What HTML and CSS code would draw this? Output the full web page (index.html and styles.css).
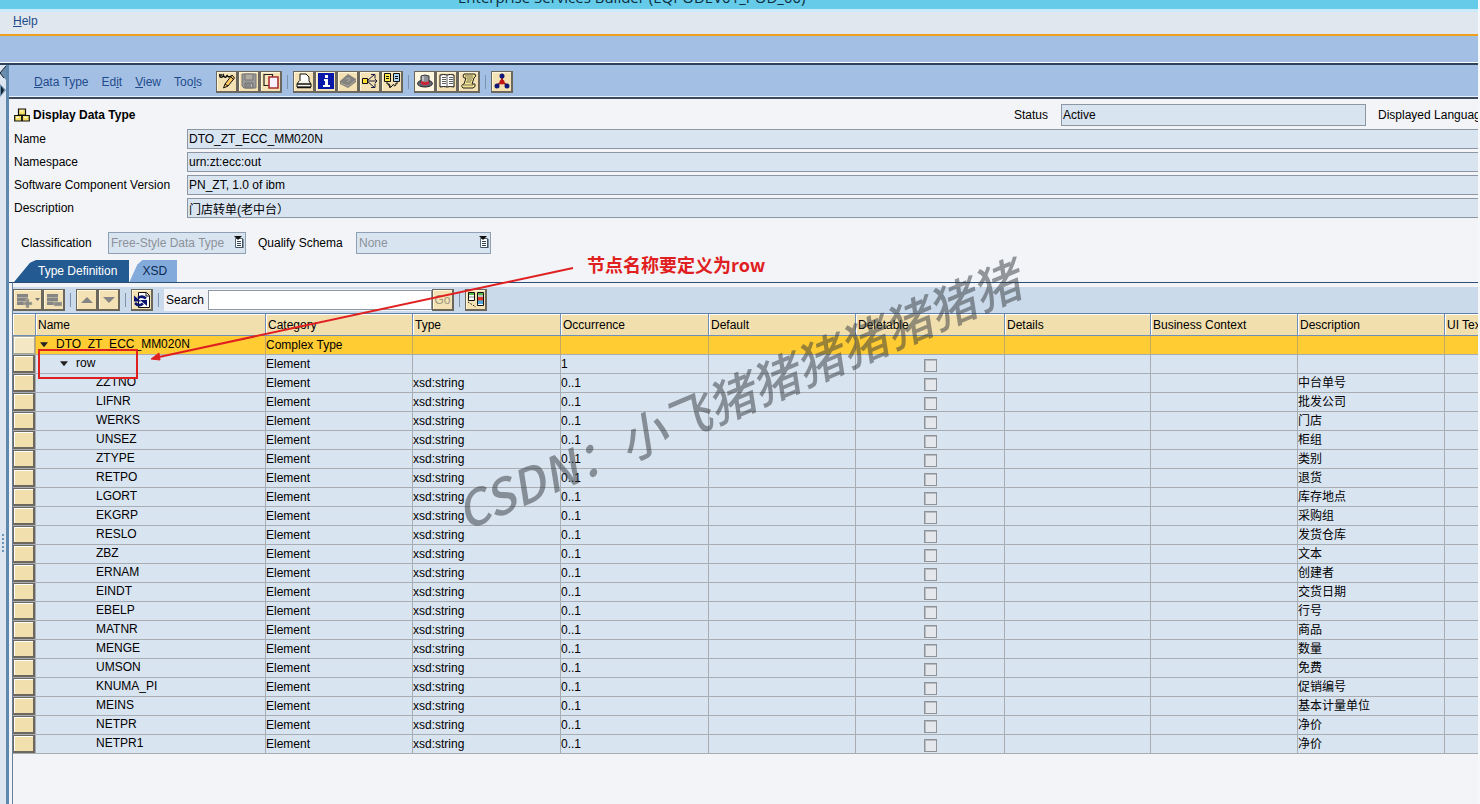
FILE: index.html
```html
<!DOCTYPE html>
<html lang="en">
<head>
<meta charset="utf-8">
<title>Enterprise Services Builder</title>
<link rel="stylesheet" href="styles.css">
</head>
<body>
<div class="page">
<header class="titlebar"><span>Enterprise Services Builder (EQPODEV01_POD_00)</span></header>
<nav class="menubar"><a href="#"><u>H</u>elp</a></nav>
<div class="band"></div>
<div class="workspace">
<aside class="splitter">
<svg class="handles" width="6" height="32" viewBox="0 0 6 32"><path d="M6 0L0 7L6 14Z" fill="#6a8cae"/><path d="M6 0L0 7L4 12" fill="none" stroke="#10202c"/><path d="M0 18L6 24L0 31Z" fill="#6a8cae"/><path d="M1 20V29L4 24Z" fill="#10202c"/></svg>
<svg class="grip" width="4" height="20" viewBox="0 0 4 20"><path d="M2 0h2v2h-2zM2 4h2v2h-2zM2 8h2v2h-2zM2 12h2v2h-2zM2 16h2v2h-2z" fill="#6a94b8"/></svg>
</aside>
<main class="editor">
<div class="toolbar">
<nav class="menus"><a href="#"><u>D</u>ata Type</a><a href="#">Ed<u>i</u>t</a><a href="#"><u>V</u>iew</a><a href="#">Too<u>l</u>s</a></nav>
<div class="group">
<button class="tool" aria-label="Display or change"><svg viewBox="0 0 16 16"><path d="M4.500 15L6 11L13 2L15.500 5L9 13Z" fill="#ffc860" stroke="#111"/><path d="M6 11l3 2M12 4l2.500 2.500" stroke="#111"/><path d="M1 1q-1 4 2 3q2-1 1-3q1 4 3 3q1-1 1-2q1 3 4 1M1 2h2" fill="none" stroke="#111" stroke-width="1.400"/></svg></button>
<button class="tool" aria-label="Save" disabled><svg viewBox="0 0 16 16"><path d="M1 1h14v14H3l-2-2z" fill="#999" stroke="#777"/><path d="M4 1h8v6H4z" fill="#b0aca2" stroke="#777"/><path d="M4 10h8v5H4z" fill="#888" stroke="#777"/><path d="M10 11h1v3h-1z" fill="#bbb"/></svg></button>
<button class="tool" aria-label="Copy"><svg viewBox="0 0 16 16"><path d="M1 1.500h8.500v11H1z" fill="#f8e7bd" stroke="#222" stroke-width="1.200"/><path d="M6 4h9v11H6z" fill="#f6f2ff" stroke="#a83030" stroke-width="1.600"/></svg></button>
</div><i class="sep"></i>
<div class="group">
<button class="tool" aria-label="Print"><svg viewBox="0 0 16 16"><path d="M4 1h6l3 3v6H4z" fill="#fff" stroke="#111"/><path d="M3 8L1 11v3h14v-3l-2-3" fill="#f4f4ea" stroke="#111"/><path d="M1 11h14M1 14.500h14" stroke="#111" stroke-width="1.500"/></svg></button>
<button class="tool" aria-label="Information"><svg viewBox="0 0 16 16"><path d="M0 0h16v16H0z" fill="#0818a8"/><path d="M7 2h3v3H7zM6 6h4v6h2v2H5v-2h2V8H6z" fill="#fff"/></svg></button>
<button class="tool" aria-label="Documentation" disabled><svg viewBox="0 0 16 16"><path d="M0 8L8 1L16 6V9L8 15L0 11Z" fill="#85837e"/><path d="M1 10l7 3l8-6" fill="none" stroke="#aaa69c"/><path d="M6 6l3-1l1 2l-3 2" fill="none" stroke="#aaa"/></svg></button>
<button class="tool" aria-label="Where used"><svg viewBox="0 0 16 16"><path d="M.5 5.500h5v5h-5z" fill="#ffe030" stroke="#111"/><path d="M6 8h9M6 7l6-5M6 9l6 5M13 6l2 2l-2 2M9 1.500h4v4M9 14.500h4v-4" fill="none" stroke="#1a1a40"/></svg></button>
<button class="tool" aria-label="Object references"><svg viewBox="0 0 16 16"><path d="M.5.5h6v8h-6z" fill="#ffe848" stroke="#111"/><path d="M9.500.5h6v8h-6z" fill="#a8d4f8" stroke="#111"/><path d="M2 3.500h3M2 5.500h3M11 3.500h3M11 5.500h3M3 9v2h2M13 9v2h-2M4 12q2-2 2 1t2 0t2-1t2 0M5 12l1 3" fill="none" stroke="#111"/></svg></button>
</div><i class="sep"></i>
<div class="group">
<button class="tool pressed" aria-label="Header details"><svg viewBox="0 0 16 16"><ellipse cx="8" cy="10.500" rx="7.500" ry="3.500" fill="#667" stroke="#222"/><path d="M4 3q4-2 8 0v7q-4 2-8 0z" fill="#8d9098" stroke="#333"/><path d="M4 8q4 2 8 0v3q-4 2-8 0z" fill="#cf2438"/><path d="M6 3v5" stroke="#eee"/></svg></button>
<button class="tool" aria-label="Table view"><svg viewBox="0 0 16 16"><path d="M1 2q4-1 7 0q3-1 7 0v12q-4-1-7 0q-3-1-7 0z" fill="#fff" stroke="#111"/><path d="M8 2v12M3 4.500h4M3 6.500h4M3 8.500h4M3 10.500h4M10 4.500h4M10 6.500h4M10 8.500h4M10 10.500h4" stroke="#333" stroke-width=".8"/></svg></button>
<button class="tool" aria-label="History"><svg viewBox="0 0 16 16"><path d="M3 1h11q2 2-1 4l-2 6h3q1 3-2 4H2q-3-3 1-4l2-6H3q-2-2 0-4z" fill="#f6e58c" stroke="#222"/><path d="M6 5h6M6 7h5M5 9h5M2 12h10M4 3h8" stroke="#555" stroke-width=".8"/></svg></button>
</div><i class="sep"></i>
<div class="group"><button class="tool" aria-label="Dependencies"><svg viewBox="0 0 16 16"><path d="M8 3v6L3 12M8 9l5 3" fill="none" stroke="#a82018" stroke-width="2"/><circle cx="8" cy="3" r="2.500" fill="#101878"/><circle cx="3" cy="13" r="2.500" fill="#101878"/><circle cx="13" cy="13" r="2.500" fill="#101878"/><circle cx="8" cy="9" r="2.500" fill="#c01818"/></svg></button></div>
</div>

<section class="details">
<div class="heading">
<svg width="16" height="14" viewBox="0 0 16 14"><path d="M4.500 1h7v6h-7zM.7 7.500h7v5.500h-7zM8.300 7.500h7v5.500h-7z" fill="#f5e06a" stroke="#111" stroke-width="1.200"/><path d="M6 3h3M2 9.500h3M10 9.500h3" stroke="#fffbe0"/></svg>
<h1>Display Data Type</h1>
<div class="status"><label for="status">Status</label><input id="status" value="Active" readonly><span class="lang">Displayed Language</span></div>
</div>
<div class="fields">
<label for="name">Name</label><input id="name" value="DTO_ZT_ECC_MM020N" readonly>
<label for="ns">Namespace</label><input id="ns" value="urn:zt:ecc:out" readonly>
<label for="scv">Software Component Version</label><input id="scv" value="PN_ZT, 1.0 of ibm" readonly>
<label for="desc">Description</label><input id="desc" value="门店转单(老中台）" readonly>
</div>
<div class="choices">
<label for="cls">Classification</label>
<span class="picker short"><select id="cls" disabled><option>Free-Style Data Type</option></select><svg viewBox="0 0 10 12"><path d="M1.500 2.500h7v9h-7z" fill="#fff" stroke="#567"/><path d="M9 3v9H2M3 5.500h4M3 7.500h4M3 9.500h4" fill="none" stroke="#345"/><path d="M0 0h8L4 4z" fill="#111"/></svg></span>
<label class="second" for="qs">Qualify Schema</label>
<span class="picker"><select id="qs" disabled><option>None</option></select><svg viewBox="0 0 10 12"><path d="M1.500 2.500h7v9h-7z" fill="#fff" stroke="#567"/><path d="M9 3v9H2M3 5.500h4M3 7.500h4M3 9.500h4" fill="none" stroke="#345"/><path d="M0 0h8L4 4z" fill="#111"/></svg></span>
</div>
</section>

<div class="tabs" role="tablist"><button class="tab active" role="tab" aria-selected="true">Type Definition</button><button class="tab" role="tab" aria-selected="false">XSD</button></div>

<section class="panel">
<div class="tablebar">
<div class="group">
<button class="tool wide" aria-label="Insert row" disabled><svg viewBox="0 0 24 16"><path d="M1 2h11v11H1z" fill="#858585"/><path d="M1 5.500h11M1 9.500h11" stroke="#b4ae9c"/><path d="M10 7h3v3h3v3h-3v3h-3v-3H8v-3h2z" fill="#8b8b86" stroke="#c9c0a2" stroke-width=".6"/><path d="M19 6h5l-2.500 3z" fill="#777"/></svg></button>
<button class="tool" aria-label="Delete row" disabled><svg viewBox="0 0 16 16"><path d="M1 2h11v11H1z" fill="#858585"/><path d="M1 5.500h11M1 9.500h11" stroke="#b4ae9c"/><path d="M8 10h8v4H8z" fill="#8b8b86" stroke="#c9c0a2" stroke-width=".6"/></svg></button>
</div><i class="sep"></i>
<div class="group">
<button class="tool" aria-label="Move up" disabled><svg viewBox="0 0 16 16"><path d="M2 11h12L8 5z" fill="#858585"/></svg></button>
<button class="tool" aria-label="Move down" disabled><svg viewBox="0 0 16 16"><path d="M2 5h12l-6 6z" fill="#858585"/></svg></button>
</div><i class="sep"></i>
<div class="group"><button class="tool" aria-label="Refresh"><svg viewBox="0 0 16 16"><path d="M4.500.5h8l3 3v12h-11z" fill="#fff" stroke="#111"/><path d="M12 1v3h3" fill="none" stroke="#111"/><path d="M12 6.500Q8 3 4 6" fill="none" stroke="#0a1470" stroke-width="2.500"/><path d="M1 11Q5 15 9 11.500" fill="none" stroke="#0a1470" stroke-width="2.500"/><path d="M0 3.500v6h7zM13 14V8H6z" fill="#0a1470"/></svg></button></div><i class="sep"></i>
<form class="search"><label for="q">Search</label><input id="q"><button class="tool" type="button" disabled>Go</button></form><i class="sep"></i>
<div class="group"><button class="tool" aria-label="Configure columns"><svg viewBox="0 0 16 16"><path d="M.5.5h6v8h-6zM9.500.5h6v13h-6z" fill="#fff" stroke="#111"/><path d="M1 1h5v2H1zM10 1h5v2h-5z" fill="#54b848"/><path d="M10 5h5v3h-5z" fill="#e0342c"/><path d="M10 9h5v3h-5z" fill="#56a8e0"/><path d="M1 5h5M10 4h5M10 8.500h5" stroke="#555" stroke-width=".7"/><path d="M0 10l8 5" stroke="#111" stroke-dasharray="1.500 1.500"/></svg></button></div>
</div>
<table>
<colgroup><col class="c-pick"><col class="c-name"><col class="c-cat"><col class="c-type"><col class="c-occ"><col class="c-def"><col class="c-del"><col class="c-det"><col class="c-ctx"><col class="c-desc"><col class="c-ui"></colgroup>
<thead><tr><th><th>Name<th>Category<th>Type<th>Occurrence<th>Default<th>Deletable<th>Details<th>Business Context<th>Description<th>UI Text</thead>
<tbody>
<tr class="current"><td><button class="pick" aria-label="Select DTO_ZT_ECC_MM020N"></button><td class="n0"><span class="twist"></span>DTO_ZT_ECC_MM020N<td>Complex Type<td><td><td><td><td><td><td><td>
<tr><td><button class="pick" aria-label="Select row"></button><td class="n1"><span class="twist"></span>row<td>Element<td><td>1<td><td><input type="checkbox" aria-label="row deletable" disabled><td><td><td><td>
<tr><td><button class="pick" aria-label="Select ZZTNO"></button><td class="n2">ZZTNO<td>Element<td>xsd:string<td>0..1<td><td><input type="checkbox" aria-label="ZZTNO deletable" disabled><td><td><td>中台单号<td>
<tr><td><button class="pick" aria-label="Select LIFNR"></button><td class="n2">LIFNR<td>Element<td>xsd:string<td>0..1<td><td><input type="checkbox" aria-label="LIFNR deletable" disabled><td><td><td>批发公司<td>
<tr><td><button class="pick" aria-label="Select WERKS"></button><td class="n2">WERKS<td>Element<td>xsd:string<td>0..1<td><td><input type="checkbox" aria-label="WERKS deletable" disabled><td><td><td>门店<td>
<tr><td><button class="pick" aria-label="Select UNSEZ"></button><td class="n2">UNSEZ<td>Element<td>xsd:string<td>0..1<td><td><input type="checkbox" aria-label="UNSEZ deletable" disabled><td><td><td>柜组<td>
<tr><td><button class="pick" aria-label="Select ZTYPE"></button><td class="n2">ZTYPE<td>Element<td>xsd:string<td>0..1<td><td><input type="checkbox" aria-label="ZTYPE deletable" disabled><td><td><td>类别<td>
<tr><td><button class="pick" aria-label="Select RETPO"></button><td class="n2">RETPO<td>Element<td>xsd:string<td>0..1<td><td><input type="checkbox" aria-label="RETPO deletable" disabled><td><td><td>退货<td>
<tr><td><button class="pick" aria-label="Select LGORT"></button><td class="n2">LGORT<td>Element<td>xsd:string<td>0..1<td><td><input type="checkbox" aria-label="LGORT deletable" disabled><td><td><td>库存地点<td>
<tr><td><button class="pick" aria-label="Select EKGRP"></button><td class="n2">EKGRP<td>Element<td>xsd:string<td>0..1<td><td><input type="checkbox" aria-label="EKGRP deletable" disabled><td><td><td>采购组<td>
<tr><td><button class="pick" aria-label="Select RESLO"></button><td class="n2">RESLO<td>Element<td>xsd:string<td>0..1<td><td><input type="checkbox" aria-label="RESLO deletable" disabled><td><td><td>发货仓库<td>
<tr><td><button class="pick" aria-label="Select ZBZ"></button><td class="n2">ZBZ<td>Element<td>xsd:string<td>0..1<td><td><input type="checkbox" aria-label="ZBZ deletable" disabled><td><td><td>文本<td>
<tr><td><button class="pick" aria-label="Select ERNAM"></button><td class="n2">ERNAM<td>Element<td>xsd:string<td>0..1<td><td><input type="checkbox" aria-label="ERNAM deletable" disabled><td><td><td>创建者<td>
<tr><td><button class="pick" aria-label="Select EINDT"></button><td class="n2">EINDT<td>Element<td>xsd:string<td>0..1<td><td><input type="checkbox" aria-label="EINDT deletable" disabled><td><td><td>交货日期<td>
<tr><td><button class="pick" aria-label="Select EBELP"></button><td class="n2">EBELP<td>Element<td>xsd:string<td>0..1<td><td><input type="checkbox" aria-label="EBELP deletable" disabled><td><td><td>行号<td>
<tr><td><button class="pick" aria-label="Select MATNR"></button><td class="n2">MATNR<td>Element<td>xsd:string<td>0..1<td><td><input type="checkbox" aria-label="MATNR deletable" disabled><td><td><td>商品<td>
<tr><td><button class="pick" aria-label="Select MENGE"></button><td class="n2">MENGE<td>Element<td>xsd:string<td>0..1<td><td><input type="checkbox" aria-label="MENGE deletable" disabled><td><td><td>数量<td>
<tr><td><button class="pick" aria-label="Select UMSON"></button><td class="n2">UMSON<td>Element<td>xsd:string<td>0..1<td><td><input type="checkbox" aria-label="UMSON deletable" disabled><td><td><td>免费<td>
<tr><td><button class="pick" aria-label="Select KNUMA_PI"></button><td class="n2">KNUMA_PI<td>Element<td>xsd:string<td>0..1<td><td><input type="checkbox" aria-label="KNUMA_PI deletable" disabled><td><td><td>促销编号<td>
<tr><td><button class="pick" aria-label="Select MEINS"></button><td class="n2">MEINS<td>Element<td>xsd:string<td>0..1<td><td><input type="checkbox" aria-label="MEINS deletable" disabled><td><td><td>基本计量单位<td>
<tr><td><button class="pick" aria-label="Select NETPR"></button><td class="n2">NETPR<td>Element<td>xsd:string<td>0..1<td><td><input type="checkbox" aria-label="NETPR deletable" disabled><td><td><td>净价<td>
<tr><td><button class="pick" aria-label="Select NETPR1"></button><td class="n2">NETPR1<td>Element<td>xsd:string<td>0..1<td><td><input type="checkbox" aria-label="NETPR1 deletable" disabled><td><td><td>净价<td>
</tbody>
</table>
</section>
</main>
</div>
<div class="mark-box"></div>
<svg class="mark-arrow" width="424" height="98" viewBox="0 0 424 98"><path d="M422 2L8 91" stroke="#e02020" stroke-width="2"/><path d="M0 93L8 87L9 94Z" fill="#e02020" stroke="#e02020"/></svg>
<div class="mark-note">节点名称要定义为row</div>
<div class="watermark">CSDN：小飞猪猪猪猪猪猪猪</div>
</div>
</body>
</html>
```
FILE: styles.css
```css
* { box-sizing: border-box; }
body { margin: 0; font: 12px/16px "Liberation Sans", "Noto Sans CJK SC", sans-serif; color: #000; }
input, button, select { font: inherit; color: inherit; margin: 0; border-radius: 0; }
a { color: #1f4b8c; text-decoration: none; }

.page { position: relative; display: flex; flex-direction: column; min-height: 100vh; overflow: hidden; border-right: 2px solid #f6f7f9; background: #f2f4f8; }
.titlebar { height: 9px; overflow: hidden; display: flex; align-items: flex-end; padding-left: 458px; background: #65cbe8; color: #0c2c3c; font: 15px/24px "Open Sans", sans-serif; }
.titlebar span { white-space: nowrap; }
.menubar { height: 27px; display: flex; align-items: center; padding: 0 13px 4px; background: #e0e7ee; border-top: 3px solid #cdeafa; border-bottom: 2px solid #eda01c; }
.band { height: 29px; background: #a3c0e4; border-bottom: 2px solid #2c4258; box-shadow: inset 0 -1px #fff; }

.workspace { flex: 1; display: flex; }
.splitter { flex: none; width: 9px; display: flex; flex-direction: column; background: #dce5f0; border-right: 3px solid #5f88ae; }
.handles { margin-top: 1px; }
.grip { margin-top: 436px; }
.editor { flex: 1; min-width: 0; display: flex; flex-direction: column; overflow: hidden; }

.toolbar { height: 34px; display: flex; align-items: center; padding-left: 25px; padding-top: 1px; background: #a3c0e4; border-bottom: 2px solid #3c4a5e; box-shadow: inset 0 -1px #e8f2ff; }
.menus { display: flex; gap: 13px; width: 182px; }
.group { display: flex; flex: none; }
.tool { flex: none; width: 22px; height: 22px; padding: 0; display: flex; align-items: center; justify-content: center; background: #f4e2b4; border: 1px solid #6b675c; border-right-width: 2px; border-bottom-width: 2px; box-shadow: inset 1px 1px #fff6dc; }
.tool svg { width: 16px; height: 16px; }
.tool.wide { width: 30px; }
.tool.wide svg { width: 24px; }
.tool.pressed { background: #fdf6e0; }
.tool:disabled { color: #a09880; }
.sep { flex: none; width: 1px; height: 14px; margin: 0 5px; background: #7d93ac; }

.details { display: flex; flex-direction: column; padding-left: 5px; }
.heading { display: flex; align-items: center; gap: 3px; height: 22px; margin-top: 5px; }
h1 { margin: 0; font-size: 12px; }
.status { display: flex; align-items: center; flex: none; width: 464px; margin-left: auto; white-space: nowrap; overflow: hidden; }
.status label { flex: none; width: 47px; }
.status input { flex: none; width: 305px; height: 22px; margin-right: 12px; }
.details input { padding: 0 1px; border: 1px solid #8d97a3; background: #d9e4f1; outline: 0; }
.fields { display: grid; grid-template-columns: 173px 1fr; grid-auto-rows: 20px; row-gap: 3px; align-items: center; margin-top: 3px; white-space: nowrap; }
.fields input { width: 100%; height: 20px; border-right: 0; }
.choices { display: flex; align-items: center; height: 22px; margin: 14px 0 6px 7px; }
.choices label { width: 87px; white-space: nowrap; }
.choices .second { width: 98px; }
.picker { position: relative; width: 135px; height: 22px; }
.picker.short { width: 138px; margin-right: 12px; }
.picker select { appearance: none; display: block; width: 100%; height: 22px; padding: 0 2px; border: 1px solid #8fa0b2; background: #d9e4f1; color: #8c9299; opacity: 1; }
.picker svg { position: absolute; right: 2px; top: 4px; width: 10px; height: 12px; }

.tabs { display: flex; height: 23px; padding-left: 5px; border-bottom: 1px solid #2c4f78; }
.tab { border: 0; height: 22px; padding: 0 10px 0 24px; background: #82aadb; color: #0c2a52; clip-path: polygon(0 100%, 8px 20%, 13px 0, 100% 0, 100% 100%); }
.tab:last-child { padding-left: 13px; }
.tab.active { padding-right: 12px; background: #245a92; color: #fff; clip-path: polygon(0 100%, 16px 12%, 22px 0, 100% 0, 100% 100%); }

.panel { flex: 1; margin-left: 3px; padding-top: 4px; border-left: 1px solid #6a7f98; overflow: hidden; }
.tablebar { display: flex; align-items: center; height: 26px; background: #cbdaea; }
.search { display: flex; align-items: center; padding-left: 2px; background: #f2f4f8; }
.search label { width: 42px; }
.search input { width: 224px; height: 20px; padding: 0 2px; border: 1px solid #8d97a3; background: #fff; }

table { table-layout: fixed; width: 1579px; border-spacing: 0; border-top: 1px solid #5f7ea8; }
.c-pick { width: 23px; }
.c-name { width: 230px; }
.c-cat { width: 147px; }
.c-type { width: 148px; }
.c-occ { width: 148px; }
.c-def { width: 147px; }
.c-del { width: 149px; }
.c-det { width: 146px; }
.c-ctx { width: 147px; }
.c-desc { width: 147px; }
.c-ui { width: 147px; }
th { height: 22px; padding: 0 2px; text-align: left; font-weight: normal; background: #f2dfae; border-right: 1px solid #6f8fb8; border-bottom: 1px solid #6f8fb8; box-shadow: inset 1px 1px #fff; white-space: nowrap; }
td { height: 19px; padding: 0; line-height: 16px; background: #d9e4f1; border-right: 1px solid #a8adb3; border-bottom: 1px solid #a8adb3; white-space: nowrap; }
.current td { background: #ffcc33; border-right-color: #c8a860; }
.pick { display: block; width: 22px; height: 18px; padding: 0; background: #f2dfae; border: solid #6c6860; border-width: 1px 2px 2px 1px; box-shadow: inset 1px 1px #fff; }
.current .pick { border-color: #a8a698; border-width: 1px; background: #f4e8c4; }
.n0, .n1, .n2 { padding-bottom: 2px; }
.n0 { padding-left: 4px; }
.n1 { padding-left: 24px; }
.n2 { padding-left: 60px; }
.twist { display: inline-block; width: 8px; height: 5px; margin-right: 8px; vertical-align: middle; background: #222; clip-path: polygon(0 0, 100% 0, 50% 100%); }
td input { appearance: none; display: block; width: 13px; height: 13px; margin: 2px auto 0; border: 1px solid #8f9398; background: #e4e8ec; box-shadow: inset 1px 1px #b8bcc0; }

.mark-box { position: absolute; left: 38px; top: 349px; width: 100px; height: 30px; border: 2px solid #e02020; }
.mark-arrow { position: absolute; left: 151px; top: 266px; }
.mark-note { position: absolute; left: 587px; top: 251px; font: bold 18px/26px "Noto Sans CJK SC", sans-serif; color: #e02020; white-space: nowrap; }
.watermark { position: absolute; left: 466px; top: 482px; font: italic 500 48px/56px "Noto Sans CJK SC", sans-serif; color: rgba(50, 55, 60, .5); white-space: nowrap; transform: rotate(-23deg); transform-origin: 0 50px; }
```
